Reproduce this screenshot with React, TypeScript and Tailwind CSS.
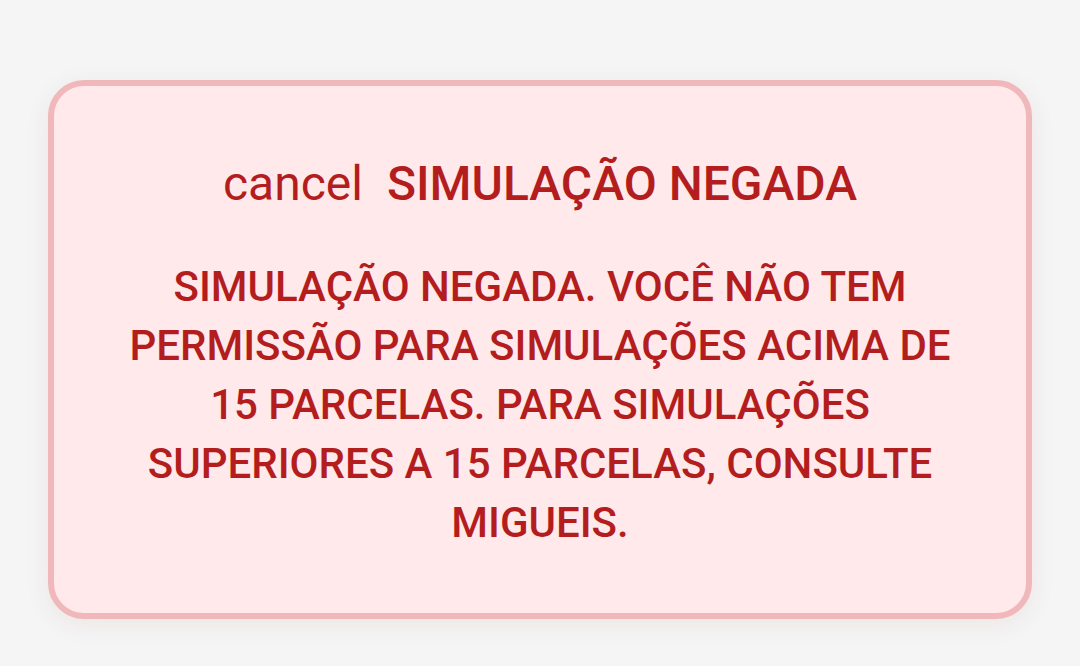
export default function App() {
  return (
    <main className="min-h-screen bg-[#f5f5f5] px-12 pt-20 pb-10 font-['Roboto',sans-serif]">
      <section
        role="alert"
        className="rounded-[36px] border-6 border-[#f0b8bb] bg-[#ffe9ea] px-[66px] py-[61px] text-center font-medium text-[#b41d1e] shadow-[0_6px_26px_rgba(120,30,20,0.07)]"
      >
        <h1 className="flex items-center justify-center gap-6 text-[48px] leading-[74px]">
          <span className="font-normal">cancel</span>
          <span>SIMULAÇÃO NEGADA</span>
        </h1>
        <p className="mt-9 text-[42px] leading-[59px]">
          SIMULAÇÃO NEGADA. VOCÊ NÃO TEM PERMISSÃO PARA SIMULAÇÕES ACIMA DE 15
          PARCELAS. PARA SIMULAÇÕES SUPERIORES A 15 PARCELAS, CONSULTE MIGUEIS.
        </p>
      </section>
    </main>
  );
}
